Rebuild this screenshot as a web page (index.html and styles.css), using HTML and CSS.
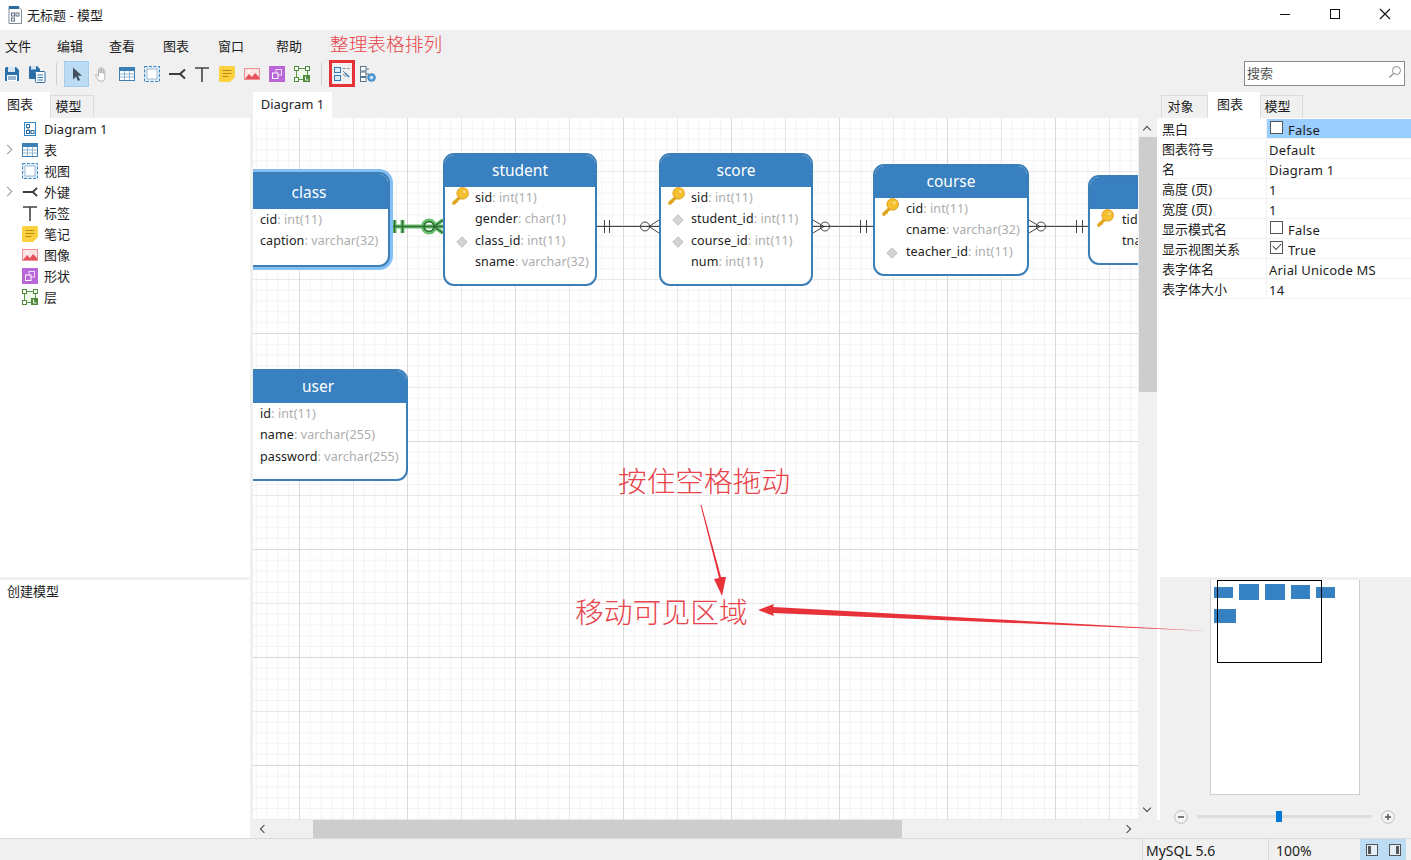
FILE: index.html
```html
<!DOCTYPE html>
<html lang="zh">
<head>
<meta charset="utf-8">
<title>无标题 - 模型</title>
<link rel="stylesheet" href="styles.css">
</head>
<body>
<svg class="sprite" width="0" height="0" aria-hidden="true">
  <symbol id="i-diagram" viewBox="0 0 16 16"><rect x="2.5" y="1.5" width="11" height="13" fill="#fff" stroke="#2f86c9"/><rect x="4.5" y="3.5" width="3" height="3" fill="none" stroke="#2f6d9f"/><rect x="4.5" y="9.5" width="3" height="3" fill="none" stroke="#2f6d9f"/><rect x="9" y="9.5" width="3" height="3" fill="none" stroke="#2f6d9f"/><path d="M6 6.5v3M7.5 11H9" stroke="#2f6d9f"/></symbol>
  <symbol id="i-save" viewBox="0 0 16 16"><path d="M1 2.5A1.5 1.5 0 0 1 2.500 1H12l3 3v10.500a.5.500 0 0 1-.5.500h-13a.5.500 0 0 1-.5-.500z" fill="#2b6fa8"/><rect x="4" y="1" width="7" height="5" fill="#d8e6f2"/><rect x="3" y="9" width="10" height="6" fill="#fff"/><path d="M4 11h8M4 13h8" stroke="#2b6fa8"/></symbol>
  <symbol id="i-saveas" viewBox="0 0 18 18"><path d="M1 2.500A1.500 1.500 0 0 1 2.500 1H9l3 3v3H7v7H2a1 1 0 0 1-1-1z" fill="#2b6fa8"/><rect x="3" y="1" width="5" height="3.500" fill="#d8e6f2"/><rect x="7.500" y="6.500" width="9.500" height="11" rx="1" fill="#fff" stroke="#2b6fa8"/><path d="M9.500 10h5.500M9.500 12.500h5.500M9.500 15h5.500" stroke="#2b6fa8"/></symbol>
  <symbol id="i-pointer" viewBox="0 0 16 16"><path d="M4 1.500v12l3-3 2 4.500 2-1-2-4.200h4z" fill="#44505c"/></symbol>
  <symbol id="i-hand" viewBox="0 0 16 16"><path d="M5 15c-1-2-3-4-3.500-6 .3-1 1.500-.8 2 0l1 1.500V3.500c0-1.200 1.500-1.200 1.600 0V7V2.300c0-1.100 1.600-1.100 1.600 0V7V3c0-1.100 1.600-1.100 1.600 0v4.500V5c0-1.100 1.500-1.100 1.500 0v6c0 2-.8 3-1.300 4z" fill="#fff" stroke="#b4b4b4"/></symbol>
  <symbol id="i-table" viewBox="0 0 16 16"><rect x=".5" y="1.500" width="15" height="13" fill="#fff" stroke="#3c80b5"/><rect x="0" y="1" width="16" height="4" fill="#3c80b5"/><path d="M5.500 5v9M10.500 5v9M1 8h14M1 11h14" stroke="#8fb6d3"/></symbol>
  <symbol id="i-view" viewBox="0 0 16 16"><rect x="1" y="1" width="14" height="14" fill="#dcebf7"/><rect x="3" y="3" width="10" height="10" fill="#fff" stroke="#9fbcd4"/><rect x=".5" y=".5" width="15" height="15" fill="none" stroke="#3c86c0" stroke-dasharray="3 1.500"/></symbol>
  <symbol id="i-fk" viewBox="0 0 18 16"><path d="M1 8h13M17 3.500 12 8l5 4.500" fill="none" stroke="#3d3d3d" stroke-width="2"/></symbol>
  <symbol id="i-text" viewBox="0 0 16 16"><path d="M1 2h14M8 2v14" fill="none" stroke="#444" stroke-width="1.600"/></symbol>
  <symbol id="i-note" viewBox="0 0 16 16"><path d="M1.500 0h13A1.500 1.500 0 0 1 16 1.500V11l-5 5H1.500A1.500 1.500 0 0 1 0 14.500v-13A1.500 1.500 0 0 1 1.500 0z" fill="#fbd13f"/><path d="M3.500 4.500h9M3.500 7.500h9M3.500 10.500h6" stroke="#b98a0e"/></symbol>
  <symbol id="i-image" viewBox="0 0 16 16"><rect x=".5" y="2.500" width="15" height="11" fill="#fbe3e3" stroke="#ee8f94"/><path d="M1 13l4-5 3 3 3-4 4 4v2z" fill="#e8525c"/><circle cx="5" cy="5.500" r="1.200" fill="#fff"/></symbol>
  <symbol id="i-shape" viewBox="0 0 16 16"><rect width="16" height="16" fill="#b966d8"/><rect x="7" y="3.500" width="5.500" height="5.500" fill="none" stroke="#f2dcf9"/><rect x="3.500" y="7" width="5.500" height="5.500" fill="#b966d8" stroke="#fff"/></symbol>
  <symbol id="i-layer" viewBox="0 0 16 16"><path d="M2.500 2.500h11v11h-11z" fill="#f0f7ec" stroke="#5b9a46"/><rect x=".5" y=".5" width="4" height="4" fill="#fff" stroke="#4d8a3a"/><rect x="11.500" y=".5" width="4" height="4" fill="#fff" stroke="#4d8a3a"/><rect x=".5" y="11.500" width="4" height="4" fill="#fff" stroke="#4d8a3a"/><rect x="9" y="9" width="7" height="7" fill="#4d8a3a"/><path d="M11.500 10.500v3.500h3" fill="none" stroke="#fff"/></symbol>
  <symbol id="i-arrange" viewBox="0 0 16 16"><rect x=".5" y="1.500" width="6" height="5" fill="#dcebf7" stroke="#2f7cb8"/><rect x=".5" y="9.500" width="6" height="5" fill="#dcebf7" stroke="#2f7cb8"/><path d="M8.500 2.500h3M13 2.500h2.500M9 5l5.500 5.500M9 8l3 3" stroke="#7a8c9b"/><path d="M11 7l4 4" stroke="#2f7cb8" stroke-width="1.600"/></symbol>
  <symbol id="i-arrange2" viewBox="0 0 16 16"><rect x=".5" y=".5" width="5.500" height="4.500" fill="#fff" stroke="#5b7488"/><rect x=".5" y="6" width="5.500" height="4.500" fill="#fff" stroke="#5b7488"/><rect x=".5" y="11.500" width="5.500" height="4" fill="#fff" stroke="#5b7488"/><path d="M6 3h3M6 8h3" stroke="#5b7488"/><circle cx="11.500" cy="11.500" r="3.800" fill="#5fa8df" stroke="#2f7cb8"/><circle cx="11.500" cy="11.500" r="1.300" fill="#fff"/></symbol>
  <symbol id="i-key" viewBox="0 0 18 18"><path d="M10 7 2 14.500l.5 2.500 2.500-.5 1-1.500h1.500v-1.500L11 10.500z" fill="#dfa51e"/><circle cx="12" cy="6" r="5.500" fill="#f4c02f" stroke="#d9991a" stroke-width=".8"/><circle cx="13.500" cy="4.500" r="1.300" fill="#fbe59a"/></symbol>
  <symbol id="i-diamond" viewBox="0 0 12 12"><path d="M6 .8 11.200 6 6 11.200.8 6z" fill="#d4d4d4" stroke="#bdbdbd"/></symbol>
</svg>

<header class="titlebar">
  <svg class="app-icon" viewBox="0 0 14 18"><path d="M1 .5h9l3.500 3.500v13.500H1z" fill="#fff" stroke="#7d8b99"/><rect x="1" y="0" width="10" height="3" fill="#2f6d9f"/><rect x="3.500" y="7" width="3" height="3" fill="none" stroke="#5b6f80"/><rect x="3.500" y="12" width="3" height="3" fill="none" stroke="#5b6f80"/><rect x="8" y="7" width="3" height="3" fill="none" stroke="#5b6f80"/></svg>
  <span class="title-text">无标题 - 模型</span>
  <div class="win-controls">
    <svg class="win-btn" viewBox="0 0 50 30"><path d="M20 14.500h10" stroke="#111"/></svg>
    <svg class="win-btn" viewBox="0 0 50 30"><rect x="20.500" y="9.500" width="9" height="9" fill="none" stroke="#111"/></svg>
    <svg class="win-btn" viewBox="0 0 50 30"><path d="M20 9l10 10M30 9 20 19" stroke="#111" stroke-width="1.100"/></svg>
  </div>
</header>

<nav class="menubar">
  <span>文件</span><span>编辑</span><span>查看</span><span>图表</span><span>窗口</span><span>帮助</span>
</nav>

<div class="toolbar">
  <span class="tool tool-first"><svg class="ic16"><use href="#i-save"/></svg></span>
  <span class="tool"><svg class="ic18"><use href="#i-saveas"/></svg></span>
  <span class="tool-sep"></span>
  <span class="tool tool-active"><svg class="ic16"><use href="#i-pointer"/></svg></span>
  <span class="tool"><svg class="ic16"><use href="#i-hand"/></svg></span>
  <span class="tool"><svg class="ic16"><use href="#i-table"/></svg></span>
  <span class="tool"><svg class="ic16"><use href="#i-view"/></svg></span>
  <span class="tool"><svg class="ic18"><use href="#i-fk"/></svg></span>
  <span class="tool"><svg class="ic16"><use href="#i-text"/></svg></span>
  <span class="tool"><svg class="ic16"><use href="#i-note"/></svg></span>
  <span class="tool"><svg class="ic16"><use href="#i-image"/></svg></span>
  <span class="tool"><svg class="ic16"><use href="#i-shape"/></svg></span>
  <span class="tool"><svg class="ic16"><use href="#i-layer"/></svg></span>
  <span class="tool-sep tool-sep-2"></span>
  <span class="tool tool-marked"><svg class="ic16"><use href="#i-arrange"/></svg></span>
  <span class="tool"><svg class="ic16"><use href="#i-arrange2"/></svg></span>
  <div class="search"><span class="search-text">搜索</span>
    <svg class="search-icon" viewBox="0 0 14 14"><circle cx="8.500" cy="5.500" r="4" fill="none" stroke="#8a8a8a"/><path d="M5.500 8.500 1.500 12.500" stroke="#8a8a8a" stroke-width="1.300"/></svg>
  </div>
</div>

<main class="workspace">
  <aside class="left">
    <div class="tabs">
      <span class="tab tab-on tab-left-on">图表</span><span class="tab tab-off tab-left-off">模型</span>
    </div>
    <ul class="tree">
      <li><i class="chev"></i><svg class="ic16"><use href="#i-diagram"/></svg><span>Diagram 1</span></li>
      <li><i class="chev chev-on"></i><svg class="ic16"><use href="#i-table"/></svg><span>表</span></li>
      <li><i class="chev"></i><svg class="ic16"><use href="#i-view"/></svg><span>视图</span></li>
      <li><i class="chev chev-on"></i><svg class="ic16"><use href="#i-fk"/></svg><span>外键</span></li>
      <li><i class="chev"></i><svg class="ic16"><use href="#i-text"/></svg><span>标签</span></li>
      <li><i class="chev"></i><svg class="ic16"><use href="#i-note"/></svg><span>笔记</span></li>
      <li><i class="chev"></i><svg class="ic16"><use href="#i-image"/></svg><span>图像</span></li>
      <li><i class="chev"></i><svg class="ic16"><use href="#i-shape"/></svg><span>形状</span></li>
      <li><i class="chev"></i><svg class="ic16"><use href="#i-layer"/></svg><span>层</span></li>
    </ul>
    <div class="hint">创建模型</div>
  </aside>

  <section class="center">
    <div class="tabs tabs-center"><span class="tab tab-on tab-doc">Diagram 1</span></div>
    <div class="canvas-row">
      <div class="canvas">
        <svg class="relations" width="885" height="702">
          <g class="rel-glow">
            <path d="M137 108.500h53M141.500 102v13M149.500 102v13"/>
            <circle cx="176" cy="108.500" r="6"/>
            <path d="M190 102l-9 6.500 9 6.500"/>
          </g>
          <g class="rel-green">
            <path d="M137 108.500h53M141.500 102v13M149.500 102v13"/>
            <circle cx="176" cy="108.500" r="5"/>
            <path d="M190 102l-9 6.500 9 6.500"/>
          </g>
          <g class="rel">
            <path d="M344 108.500h62M351.500 102v13M356.500 102v13M406 102l-10 6.500 10 6.500"/>
            <circle cx="392" cy="108.500" r="4.500"/>
            <path d="M560 108.500h60M560 102l11 6.500-11 6.500M607.500 102v13M613.500 102v13"/>
            <circle cx="572" cy="108.500" r="4.500"/>
            <path d="M776 108.500h59M776 102l11 6.500-11 6.500M823.500 102v13M829.500 102v13"/>
            <circle cx="788" cy="108.500" r="4.500"/>
          </g>
        </svg>

        <article class="entity e-class selected">
          <h3>class</h3>
          <ul>
            <li><i class="slot"></i><b>cid</b><em>: int(11)</em></li>
            <li><i class="slot"></i><b>caption</b><em>: varchar(32)</em></li>
          </ul>
        </article>
        <article class="entity e-student">
          <h3>student</h3>
          <ul>
            <li><i class="slot"><svg class="key"><use href="#i-key"/></svg></i><b>sid</b><em>: int(11)</em></li>
            <li><i class="slot"></i><b>gender</b><em>: char(1)</em></li>
            <li><i class="slot"><svg class="dia"><use href="#i-diamond"/></svg></i><b>class_id</b><em>: int(11)</em></li>
            <li><i class="slot"></i><b>sname</b><em>: varchar(32)</em></li>
          </ul>
        </article>
        <article class="entity e-score">
          <h3>score</h3>
          <ul>
            <li><i class="slot"><svg class="key"><use href="#i-key"/></svg></i><b>sid</b><em>: int(11)</em></li>
            <li><i class="slot"><svg class="dia"><use href="#i-diamond"/></svg></i><b>student_id</b><em>: int(11)</em></li>
            <li><i class="slot"><svg class="dia"><use href="#i-diamond"/></svg></i><b>course_id</b><em>: int(11)</em></li>
            <li><i class="slot"></i><b>num</b><em>: int(11)</em></li>
          </ul>
        </article>
        <article class="entity e-course">
          <h3>course</h3>
          <ul>
            <li><i class="slot"><svg class="key"><use href="#i-key"/></svg></i><b>cid</b><em>: int(11)</em></li>
            <li><i class="slot"></i><b>cname</b><em>: varchar(32)</em></li>
            <li><i class="slot"><svg class="dia"><use href="#i-diamond"/></svg></i><b>teacher_id</b><em>: int(11)</em></li>
          </ul>
        </article>
        <article class="entity e-teacher">
          <h3></h3>
          <ul>
            <li><i class="slot"><svg class="key"><use href="#i-key"/></svg></i><b>tid</b></li>
            <li><i class="slot"></i><b>tname</b></li>
          </ul>
        </article>
        <article class="entity e-user">
          <h3>user</h3>
          <ul>
            <li><i class="slot"></i><b>id</b><em>: int(11)</em></li>
            <li><i class="slot"></i><b>name</b><em>: varchar(255)</em></li>
            <li><i class="slot"></i><b>password</b><em>: varchar(255)</em></li>
          </ul>
        </article>
      </div>
      <div class="vscroll">
        <i class="arrow-up"></i>
        <div class="vthumb"></div>
        <i class="arrow-down"></i>
      </div>
    </div>
    <div class="hscroll">
      <i class="arrow-left"></i>
      <div class="hthumb"></div>
      <i class="arrow-right"></i>
      <div class="corner"></div>
    </div>
  </section>

  <aside class="right">
    <div class="tabs tabs-right">
      <span class="tab tab-off tab-r1">对象</span><span class="tab tab-on tab-r2">图表</span><span class="tab tab-off tab-r3">模型</span>
    </div>
    <div class="props">
      <div class="prop"><span class="pn">黑白</span><span class="pv pv-sel"><i class="check"></i>False</span></div>
      <div class="prop"><span class="pn">图表符号</span><span class="pv">Default</span></div>
      <div class="prop"><span class="pn">名</span><span class="pv">Diagram 1</span></div>
      <div class="prop"><span class="pn">高度 (页)</span><span class="pv">1</span></div>
      <div class="prop"><span class="pn">宽度 (页)</span><span class="pv">1</span></div>
      <div class="prop"><span class="pn">显示模式名</span><span class="pv"><i class="check"></i>False</span></div>
      <div class="prop"><span class="pn">显示视图关系</span><span class="pv"><i class="check check-on"></i>True</span></div>
      <div class="prop"><span class="pn">表字体名</span><span class="pv">Arial Unicode MS</span></div>
      <div class="prop"><span class="pn">表字体大小</span><span class="pv">14</span></div>
    </div>
    <div class="preview">
      <div class="page">
        <div class="mini-row mini-row-1">
          <i class="mini m1"></i><i class="mini m2"></i><i class="mini m2"></i><i class="mini m3"></i><i class="mini m1"></i>
        </div>
        <div class="mini-row"><i class="mini m4"></i></div>
        <div class="viewport"></div>
      </div>
    </div>
    <div class="zoombar">
      <svg class="zoom-btn" viewBox="0 0 14 14"><circle cx="7" cy="7" r="6.300" fill="#f4f4f4" stroke="#bdbdbd"/><path d="M4 7h6" stroke="#555" stroke-width="1.500"/></svg>
      <div class="slider"><i class="slider-thumb"></i></div>
      <svg class="zoom-btn" viewBox="0 0 14 14"><circle cx="7" cy="7" r="6.300" fill="#f4f4f4" stroke="#bdbdbd"/><path d="M4 7h6M7 4v6" stroke="#555" stroke-width="1.500"/></svg>
    </div>
  </aside>
</main>

<footer class="statusbar">
  <span class="st st-db">MySQL 5.6</span>
  <span class="st st-zoom">100%</span>
  <span class="st-toggle"><svg class="st-icon" viewBox="0 0 12 12"><rect x=".5" y=".5" width="11" height="11" fill="#e4eef6" stroke="#555"/><rect x="2" y="2" width="3" height="8" fill="#555"/></svg></span>
  <span class="st-toggle"><svg class="st-icon" viewBox="0 0 12 12"><rect x=".5" y=".5" width="11" height="11" fill="#e4eef6" stroke="#555"/><rect x="7" y="2" width="3" height="8" fill="#555"/></svg></span>
</footer>

<div class="note-text note-arrange">整理表格排列</div>
<div class="note-text note-drag">按住空格拖动</div>
<div class="note-text note-visible">移动可见区域</div>
<svg class="marks" width="1411" height="860">
  <path class="mark-line" d="M700.500 505 719 578 714 579 722 596 726 577 721 577 701.500 505z"/>
  <path class="mark-line" d="M1207 631 773 613 774 616 758 610 774 604 773 607z"/>
</svg>
</body>
</html>
```
FILE: styles.css
```css
* { box-sizing: border-box; }
html, body { margin: 0; height: 100%; }
body {
  width: 1411px; height: 860px; overflow: hidden; position: relative;
  display: flex; flex-direction: column;
  background: #f0f0f0; color: #1d1d1d;
  font: 13px "Noto Sans", "Noto Sans CJK SC", sans-serif;
}
ul { list-style: none; margin: 0; padding: 0; }
.sprite { position: absolute; }
.ic16 { width: 16px; height: 16px; display: block; flex: none; }
.ic18 { width: 18px; height: 18px; display: block; flex: none; }

.titlebar { height: 30px; background: #fff; display: flex; align-items: center; padding-left: 8px; flex: none; }
.app-icon { width: 14px; height: 18px; }
.title-text { margin-left: 5px; font-size: 13px; padding-bottom: 2px; }
.win-controls { margin-left: auto; display: flex; padding-right: 1px; }
.win-btn { width: 50px; height: 30px; display: block; }

.menubar { height: 30px; flex: none; padding-left: 5px; display: grid; grid-template-columns: 52px 52px 54px 55px 58px auto; align-items: center; background: #f0f0f0; }

.toolbar { height: 30px; flex: none; display: flex; align-items: center; padding-bottom: 3px; position: relative; }
.tool { width: 25px; height: 26px; display: flex; align-items: center; justify-content: center; flex: none; }
.tool-first { width: 24px; }
.tool-sep { width: 1px; height: 22px; background: #d0d0d0; margin: 0 7px 0 7px; flex: none; }
.tool-sep-2 { margin: 0 8px 0 7px; }
.tool-marked { outline: 3px solid #e53238; outline-offset: -2px; margin: 0 1px 0 0; width: 24px; height: 25px; }
.tool-active { background: #bcdcf4; border: 1px solid #a4cdec; }
.search { margin-left: auto; margin-right: 6px; width: 161px; height: 25px; background: #fff; border: 1px solid #8a8a8a; display: flex; align-items: center; justify-content: space-between; padding: 0 2px; color: #555; }
.search-text { margin-top: -2px; }
.search-icon { width: 14px; height: 14px; margin-top: -3px; }

.workspace { flex: 1; display: flex; min-height: 0; }
.left { width: 253px; flex: none; display: flex; flex-direction: column; padding-right: 3px; }
.tabs { height: 28px; flex: none; display: flex; align-items: flex-end; padding-top: 2px; }
.tab { display: flex; align-items: center; justify-content: center; }
.tab-on { background: #fff; height: 26px; }
.tab-off { background: #f0f0f0; border: 1px solid #dcdcdc; border-bottom: 0; height: 23px; padding-bottom: 4px; }
.tab-left-on { width: 50px; padding-bottom: 3px; padding-right: 10px; }
.tab-left-off { width: 44px; padding-right: 7px; }
.tree { background: #fff; height: 459px; }
.tree li { height: 21px; display: flex; align-items: center; }
.tree svg { margin-left: 5px; }
.tree span { margin-left: 6px; }
.chev { width: 17px; height: 21px; position: relative; flex: none; }
.chev-on::before { content: ""; position: absolute; left: 4px; top: 7px; width: 6px; height: 6px; border-top: 1.500px solid #999; border-right: 1.500px solid #999; transform: rotate(45deg); }
.hint { margin-top: 3px; background: #fff; flex: 1; padding: 1px 7px; }

.center { width: 907px; flex: none; display: flex; flex-direction: column; }
.tabs-center { padding-top: 2px; }
.tab-doc { width: 79px; height: 26px; padding-bottom: 2px; }
.canvas-row { height: 702px; display: flex; background: #fff; }
.canvas {
  width: 885px; height: 702px; position: relative; overflow: hidden; background-color: #fff;
  background-image:
    linear-gradient(90deg, #dadada 1px, transparent 1px),
    linear-gradient(180deg, #dadada 1px, transparent 1px),
    linear-gradient(90deg, #e8e8e8 1px, transparent 1px),
    linear-gradient(180deg, #e8e8e8 1px, transparent 1px),
    linear-gradient(90deg, #f3f3f3 1px, transparent 1px),
    linear-gradient(180deg, #f3f3f3 1px, transparent 1px);
  background-size: 108px 108px, 108px 108px, 54px 54px, 54px 54px, 10.8px 10.8px, 10.8px 10.8px;
  background-position: 46px 0, 0 107px, 46px 0, 0 53px, 46px 0, 0 -1px;
}
.relations { position: absolute; left: 0; top: 0; }
.rel path, .rel circle { fill: none; stroke: #444; stroke-width: 1; }
.rel-glow path, .rel-glow circle { fill: none; stroke: #6cc071; stroke-width: 4; }
.rel-green path, .rel-green circle { fill: none; stroke: #2c6e35; stroke-width: 1.500; }

.entity { position: absolute; background: #fff; border: 2px solid #3b7fb8; border-radius: 11px; overflow: hidden; font-size: 12.500px; letter-spacing: .1px; }
.entity h3 { margin: 0; height: 32px; background: #3880bf; color: #fff; font-weight: 400; font-size: 15.500px; text-align: center; line-height: 31px; letter-spacing: 0; }
.entity ul { padding-bottom: 12px; }
.entity li { height: 21.300px; display: flex; align-items: center; white-space: nowrap; }
.entity b { font-weight: 400; color: #222; }
.entity em { font-style: normal; color: #adadad; }
.slot { width: 30px; height: 21px; flex: none; position: relative; display: block; }
.key { position: absolute; left: 5px; top: 0; width: 19px; height: 19px; }
.dia { position: absolute; left: 11px; top: 6px; width: 12px; height: 12px; }
.e-class { left: -25px; top: 54px; width: 162px; height: 95px; }
.e-class h3 { height: 35px; line-height: 37px; }
.e-student { left: 190px; top: 35px; width: 154px; }
.e-score { left: 406px; top: 35px; width: 154px; }
.e-course { left: 620px; top: 46px; width: 156px; }
.e-course .slot { width: 31px; }
.e-teacher { left: 835px; top: 57px; width: 160px; height: 90px; }
.e-teacher .slot { width: 32px; }
.e-user { left: -25px; top: 251px; width: 180px; }
.selected { box-shadow: 0 0 0 3px #84c0f4; }

.vscroll { width: 19px; height: 702px; background: #f0f0f0; position: relative; padding-top: 19px; }
.vthumb { width: 18px; height: 255px; margin-left: 1px; background: #cdcdcd; }
.arrow-up, .arrow-down, .arrow-left, .arrow-right { position: absolute; width: 6px; height: 6px; border-top: 1.500px solid #444; border-right: 1.500px solid #444; }
.arrow-up { left: 6px; top: 9px; transform: rotate(-45deg); }
.arrow-down { left: 6px; bottom: 9px; transform: rotate(135deg); }
.arrow-left { left: 8px; top: 6px; transform: rotate(-135deg); }
.arrow-right { left: 871px; top: 6px; transform: rotate(45deg); }
.hscroll { height: 18px; width: 885px; background: #f0f0f0; position: relative; padding-left: 60px; }
.hthumb { width: 589px; height: 18px; background: #cdcdcd; }
.corner { position: absolute; left: 885px; top: 0; width: 22px; height: 18px; }

.right { width: 251px; flex: none; display: flex; flex-direction: column; }
.tabs-right { padding-left: 1px; }
.tab-r1 { width: 47px; padding-right: 8px; padding-bottom: 3px; }
.tab-r2 { width: 52px; height: 26px; padding-bottom: 4px; padding-right: 8px; }
.tab-r3 { width: 43px; padding-right: 8px; }
.props { background: #fff; height: 459px; padding-top: 1px; }
.prop { height: 20px; display: flex; border-bottom: 1px solid #f1f1f1; line-height: 20px; }
.pn { width: 107px; padding: 0 0 0 2px; border-right: 1px solid #f1f1f1; flex: none; white-space: nowrap; }
.pv { flex: 1; padding: 2px 0 0 2px; display: flex; align-items: center; letter-spacing: .2px; }
.pv-sel { background: #99ceff; }
.check { width: 13px; height: 13px; border: 1px solid #555; background: #fff; margin: 0 5px 0 1px; position: relative; top: -2px; display: block; flex: none; }
.check-on::after { content: ""; position: absolute; left: 2px; top: 1px; width: 7px; height: 4px; border-left: 1.200px solid #444; border-bottom: 1.200px solid #444; transform: rotate(-45deg); }
.preview { margin-top: 3px; height: 215px; flex: none; background: #f0f0f0; padding-left: 50px; }
.page { width: 150px; height: 215px; background: #fff; border: 1px solid #cfcfcf; border-top: 0; position: relative; padding: 4px 0 0 3px; }
.mini-row { display: flex; gap: 6px; align-items: center; }
.mini-row-1 { height: 16px; margin-bottom: 9px; }
.mini { background: #3581c1; display: block; flex: none; }
.m1 { width: 19px; height: 11px; }
.m2 { width: 20px; height: 16px; }
.m3 { width: 19px; height: 14px; }
.m4 { width: 22px; height: 14px; }
.viewport { position: absolute; left: 6px; top: 0; width: 105px; height: 83px; border: 1px solid #000; }
.zoombar { flex: 1; display: flex; align-items: center; padding: 0 16px 0 14px; }
.zoom-btn { width: 14px; height: 14px; flex: none; }
.slider { flex: 1; height: 3px; margin: 0 9px; background: #dedede; position: relative; }
.slider-thumb { position: absolute; left: 79px; top: -4px; width: 6px; height: 11px; background: #0078d7; display: block; }

.statusbar { height: 22px; flex: none; display: flex; align-items: center; border-top: 1px solid #d9d9d9; padding-left: 1142px; }
.st { border-left: 1px solid #d9d9d9; height: 21px; line-height: 24px; display: block; font-size: 14px; }
.st-db { width: 126px; padding-left: 3px; }
.st-zoom { width: 92px; padding-left: 7px; }
.st-toggle { width: 23px; height: 21px; background: #bcdcf4; display: flex; align-items: center; justify-content: center; }
.st-icon { width: 12px; height: 12px; }

.note-text { position: absolute; color: #e8434a; font-family: "Noto Sans CJK SC", sans-serif; font-weight: 300; white-space: nowrap; }
.note-arrange { left: 330px; top: 29px; font-size: 18.700px; line-height: 27px; }
.note-drag { left: 618px; top: 460px; font-size: 28.700px; line-height: 40px; }
.note-visible { left: 575px; top: 591px; font-size: 28.800px; line-height: 40px; }
.marks { position: absolute; left: 0; top: 0; pointer-events: none; }
.mark-line { fill: #e8323a; }
```
